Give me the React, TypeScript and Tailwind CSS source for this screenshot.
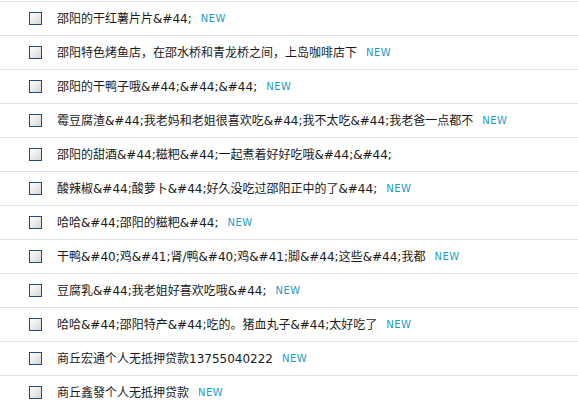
const items = [
  { title: "邵阳的干红薯片片&#44;", isNew: true },
  { title: "邵阳特色烤鱼店，在邵水桥和青龙桥之间，上岛咖啡店下", isNew: true },
  { title: "邵阳的干鸭子哦&#44;&#44;&#44;", isNew: true },
  { title: "霉豆腐渣&#44;我老妈和老姐很喜欢吃&#44;我不太吃&#44;我老爸一点都不", isNew: true },
  { title: "邵阳的甜酒&#44;糍粑&#44;一起煮着好好吃哦&#44;&#44;", isNew: false },
  { title: "酸辣椒&#44;酸萝卜&#44;好久没吃过邵阳正中的了&#44;", isNew: true },
  { title: "哈哈&#44;邵阳的糍粑&#44;", isNew: true },
  { title: "干鸭&#40;鸡&#41;肾/鸭&#40;鸡&#41;脚&#44;这些&#44;我都", isNew: true },
  { title: "豆腐乳&#44;我老姐好喜欢吃哦&#44;", isNew: true },
  { title: "哈哈&#44;邵阳特产&#44;吃的。猪血丸子&#44;太好吃了", isNew: true },
  { title: "商丘宏通个人无抵押贷款13755040222", isNew: true },
  { title: "商丘鑫發个人无抵押贷款", isNew: true },
];

export default function App() {
  return (
    <div className="h-[407px] w-[578px] overflow-hidden bg-white pt-px font-['DejaVu_Sans','Noto_Sans_CJK_SC',sans-serif] text-[12px] text-[#1a1a1a]">
      <ul className="border-t border-[#e3e3e3]">
        {items.map((item, i) => (
          <li
            key={i}
            className="box-border flex h-[34px] items-center border-b border-[#e3e3e3] pl-[29px]"
          >
            <span className="h-[13px] w-[13px] shrink-0 border border-[#1d4f7d] bg-gradient-to-br from-white to-[#d6d6d6]" />
            <span className="ml-[15px] whitespace-nowrap">{item.title}</span>
            {item.isNew && (
              <span className="ml-[9px] text-[10px] tracking-[0.5px] text-[#1a9ccc]">
                NEW
              </span>
            )}
          </li>
        ))}
      </ul>
    </div>
  );
}
